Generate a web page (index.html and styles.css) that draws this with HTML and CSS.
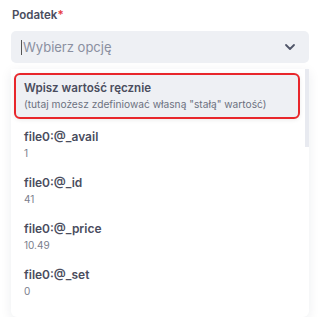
FILE: index.html
```html
<!DOCTYPE html>
<html lang="pl">
<head>
  <meta charset="UTF-8">
  <title>Podatek</title>
  <link rel="stylesheet" href="styles.css">
</head>
<body>
  <div class="field">
    <label class="field-label">Podatek<span class="req">*</span></label>
    <div class="select">
      <span class="caret"></span>
      <span class="placeholder">Wybierz opcję</span>
      <svg class="chevron" width="12" height="8" viewBox="0 0 12 8"><path d="M2 2l4 4 4-4" fill="none" stroke="#4f5468" stroke-width="1.8" stroke-linecap="round" stroke-linejoin="round"/></svg>
    </div>
    <div class="menu">
      <div class="scrollbar"></div>
      <div class="option active">
        <div class="opt-title">Wpisz wartość ręcznie</div>
        <div class="opt-sub">(tutaj możesz zdefiniować własną "stałą" wartość)</div>
      </div>
      <div class="option">
        <div class="opt-title">file0:@_avail</div>
        <div class="opt-val">1</div>
      </div>
      <div class="option">
        <div class="opt-title">file0:@_id</div>
        <div class="opt-val">41</div>
      </div>
      <div class="option">
        <div class="opt-title">file0:@_price</div>
        <div class="opt-val">10.49</div>
      </div>
      <div class="option">
        <div class="opt-title">file0:@_set</div>
        <div class="opt-val">0</div>
      </div>
    </div>
  </div>
</body>
</html>
```

FILE: styles.css
```css
body { margin: 0; background: #fff; font-family: Inter, "Open Sans", sans-serif; color: #4a4d5e; }
.field { padding: 7px 12px 0 11px; }
.field-label { display: block; font-size: 11.5px; font-weight: 600; color: #4a4d5e; margin-left: 1px; height: 17px; line-height: 17px; }
.req { color: #e53940; }
.select { position: relative; margin-top: 7px; height: 32px; background: #eef0f4; border-radius: 5px; display: flex; align-items: center; padding-left: 10px; }
.caret { width: 1px; height: 15px; background: #555; margin-right: 1px; }
.placeholder { font-size: 13px; color: #8a8fa0; flex: 1; }
.chevron { margin-right: 13px; }
.menu { position: relative; margin-top: 6px; background: #fff; border-radius: 0 0 6px 6px; box-shadow: 0 3px 12px rgba(30, 40, 70, 0.08); padding: 4px 9px 11px 3px; }
.scrollbar { position: absolute; right: 0; top: 0; width: 4px; height: 78px; background: #e8eaf0; }
.option { padding: 0 0 0 10px; height: 46px; display: flex; flex-direction: column; justify-content: center; }
.option.active { background: #eef0f4; border: 2px solid #e8262b; border-radius: 6px; height: 42px; padding-left: 8px; box-shadow: 0 1px 4px rgba(0, 0, 0, 0.08); margin-bottom: 3px; }
.opt-title { font-size: 12px; font-weight: 600; color: #4a4d5e; line-height: 16px; }
.active .opt-title { font-size: 11.6px; }
.opt-sub { font-size: 10.2px; color: #6c7080; line-height: 16px; }
.opt-val { font-size: 10px; color: #7a7e8c; line-height: 15px; margin-top: 1px; }
```
